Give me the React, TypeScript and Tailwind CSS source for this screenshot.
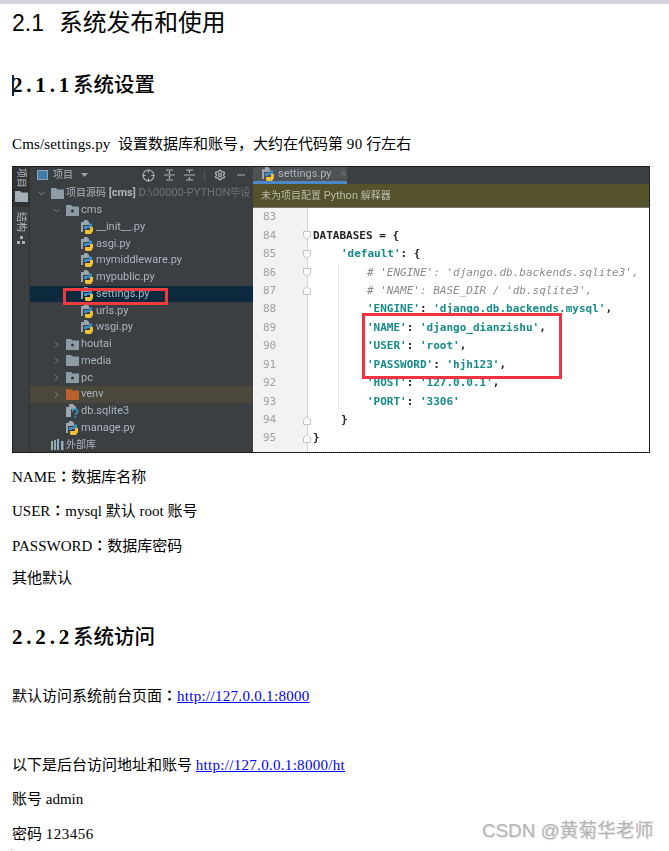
import { ChevronDown, ChevronRight, Crosshair, Minus, Settings } from "lucide-react";
import type { ReactNode } from "react";

const doc = "font-['Liberation_Serif','Noto_Sans_CJK_SC',serif] text-[15px] leading-[20px] text-black";
const ide = "font-['Roboto','Noto_Sans_CJK_SC',sans-serif]";

function PyIcon() {
  return (
    <svg width="13" height="14" viewBox="0 0 13 14" className="shrink-0">
      <path d="M0 2h3V0h3l2 2v3H2v7H0z" fill="#9aa7b0" />
      <path d="M3 6h5V3.500h3V8H6v1H3z" fill="#3f8fc4" />
      <path d="M4 13v-3h5V7h3v4l-2 3H5z" fill="#f2c037" />
    </svg>
  );
}

function DbIcon() {
  return (
    <svg width="13" height="14" viewBox="0 0 13 14" className="shrink-0">
      <path d="M0 3h3V0h4l3 3v2H5v8H0z" fill="#9aa7b0" />
      <path d="M6.500 7.500a2.500 2.500 0 1 1 3.600 2.200c-.6.300-.9.700-.9 1.300" fill="none" stroke="#3f9fd8" strokeWidth="1.400" />
      <rect x="8.500" y="12" width="1.500" height="1.600" fill="#3f9fd8" />
    </svg>
  );
}

function FolderIcon({ color = "#8d9ba5", dot = false }: { color?: string; dot?: boolean }) {
  return (
    <svg width="13" height="11" viewBox="0 0 13 11" className="shrink-0">
      <path d="M0 0h5l1.500 1.500H13V11H0z" fill={color} />
      {dot && <circle cx="6.500" cy="6" r="1.500" fill="#33373a" />}
    </svg>
  );
}

function LibIcon() {
  return (
    <svg width="13" height="11" viewBox="0 0 13 11" className="shrink-0">
      <rect x="0" y="2" width="2" height="9" fill="#8fb5a0" />
      <rect x="3" y="1" width="2" height="10" fill="#9aa7b0" />
      <rect x="6" y="0" width="2" height="11" fill="#7fb0d0" />
      <rect x="10" y="2" width="2.500" height="9" fill="#9aa7b0" />
    </svg>
  );
}

function Row({ pad, icon, chevron, children, className = "" }: { pad: string; icon: ReactNode; chevron?: "down" | "right"; children: ReactNode; className?: string }) {
  return (
    <div className={`flex h-[16.75px] shrink-0 items-center overflow-hidden whitespace-nowrap ${pad} ${className}`}>
      <span className="flex w-[15px] shrink-0 items-center">
        {chevron === "down" && <ChevronDown size={11} strokeWidth={1.5} color="#9aa5ad" />}
        {chevron === "right" && <ChevronRight size={11} strokeWidth={1.5} color="#9aa5ad" />}
      </span>
      <span className="mr-[2px] flex w-[13px] shrink-0 items-center">{icon}</span>
      {children}
    </div>
  );
}

function Fold({ kind }: { kind: "open" | "close" }) {
  return (
    <svg width="8" height="9" viewBox="0 0 8 9" className="shrink-0">
      {kind === "open" ? (
        <path d="M.5.5h7v5l-3.500 3-3.500-3z" fill="#fbfbfb" stroke="#c4c4c4" />
      ) : (
        <path d="M.5 8.500h7v-5l-3.500-3-3.500 3z" fill="#fbfbfb" stroke="#c4c4c4" />
      )}
    </svg>
  );
}

const K = ({ children }: { children: ReactNode }) => <span className="font-bold text-[#178a8a]">{children}</span>;
const C = ({ children }: { children: ReactNode }) => <span className="italic text-[#8c8c8c]">{children}</span>;
const P = ({ children }: { children: ReactNode }) => <span className="font-semibold text-[#222]">{children}</span>;

const lines: { n: number; fold?: "open" | "close"; pad: string; code: ReactNode }[] = [
  { n: 83, pad: "pl-[5px]", code: null },
  { n: 84, fold: "open", pad: "pl-[5px]", code: <P>DATABASES = {"{"}</P> },
  { n: 85, fold: "open", pad: "pl-[33px]", code: <><K>'default'</K><P>: {"{"}</P></> },
  { n: 86, fold: "open", pad: "pl-[59px]", code: <C># 'ENGINE': 'django.db.backends.sqlite3',</C> },
  { n: 87, fold: "close", pad: "pl-[59px]", code: <C># 'NAME': BASE_DIR / 'db.sqlite3',</C> },
  { n: 88, pad: "pl-[59px]", code: <><K>'ENGINE'</K><P>: </P><K>'django.db.backends.mysql'</K><P>,</P></> },
  { n: 89, pad: "pl-[59px]", code: <><K>'NAME'</K><P>: </P><K>'django_dianzishu'</K><P>,</P></> },
  { n: 90, pad: "pl-[59px]", code: <><K>'USER'</K><P>: </P><K>'root'</K><P>,</P></> },
  { n: 91, pad: "pl-[59px]", code: <><K>'PASSWORD'</K><P>: </P><K>'hjh123'</K><P>,</P></> },
  { n: 92, pad: "pl-[59px]", code: <><K>'HOST'</K><P>: </P><K>'127.0.0.1'</K><P>,</P></> },
  { n: 93, pad: "pl-[59px]", code: <><K>'PORT'</K><P>: </P><K>'3306'</K></> },
  { n: 94, fold: "close", pad: "pl-[33px]", code: <P>{"}"}</P> },
  { n: 95, fold: "close", pad: "pl-[5px]", code: <P>{"}"}</P> },
];

const Cn = ({ children }: { children: ReactNode }) => <span className="text-[10px]">{children}</span>;
const Colon = () => <span className="font-['Noto_Sans_CJK_TC',sans-serif] font-medium">：</span>;

function Screenshot() {
  return (
    <div className="relative ml-[12px] mt-[12px] flex h-[287px] w-[638px] overflow-hidden border border-dotted border-black bg-[#3c3f41]">
      {/* Left tool strip */}
      <div className={`${ide} flex w-[17px] shrink-0 flex-col items-center border-r border-[#323232] text-[10px] text-[#b5bcc2] blur-[0.3px]`}>
        <div className="flex h-[40px] w-full flex-col items-center gap-[3px] bg-[#2f3133] pt-[1px]">
          <span className="h-[20px] [text-orientation:sideways] [writing-mode:vertical-rl]">项目</span>
          <FolderIcon color="#a6afb6" />
        </div>
        <div className="mt-[5px] flex flex-col items-center gap-[2px]">
          <span className="h-[22px] [text-orientation:sideways] [writing-mode:vertical-rl]">结构</span>
          <svg width="9" height="8" viewBox="0 0 9 8">
            <rect x="3" y="0" width="3" height="3" fill="#a6afb6" />
            <rect x="0" y="5" width="3" height="3" fill="#a6afb6" />
            <rect x="5" y="5" width="3" height="3" fill="#a6afb6" />
          </svg>
        </div>
      </div>

      {/* Project tree */}
      <div className={`${ide} flex w-[223px] shrink-0 flex-col text-[11px] text-[#a9b4bd] blur-[0.3px]`}>
        <div className="flex h-[16px] shrink-0 items-center pl-[7px] pr-[3px]">
          <span className="mr-[5px] h-[10px] w-[11px] border border-[#8fa3b0] bg-[#3f7ea8]" />
          <Cn>项目</Cn>
          <svg width="7" height="4" viewBox="0 0 7 4" className="ml-[8px]"><path d="M0 0h7L3.500 4z" fill="#9aa5ad" /></svg>
          <Crosshair size={13} strokeWidth={2} color="#aeb6bc" className="ml-[54px]" />
          <svg width="11" height="12" viewBox="0 0 11 12" className="ml-[9px]"><path d="M0 6h11M2 1h7M2 11h7M5.500 2v3M5.500 7v3" stroke="#aeb6bc" strokeWidth="1.200" /></svg>
          <svg width="11" height="12" viewBox="0 0 11 12" className="ml-[9px]"><path d="M0 6h11M2 1h7M2 11h7M5.500 1v3M5.500 8v3" stroke="#aeb6bc" strokeWidth="1.200" /></svg>
          <span className="ml-[9px] h-[11px] w-px bg-[#55585a]" />
          <Settings size={12} strokeWidth={2.500} color="#aeb6bc" className="ml-[9px]" />
          <Minus size={12} strokeWidth={2} color="#aeb6bc" className="ml-[9px]" />
        </div>
        <div className="flex flex-col pt-[2px]">
          <Row pad="pl-[6px]" chevron="down" icon={<FolderIcon />}>
            <span><Cn>项目源码</Cn> <b>[cms]</b> <span className="text-[#6d7478]">D:\00000-PYTHON<Cn>毕设</Cn></span></span>
          </Row>
          <Row pad="pl-[21px]" chevron="down" icon={<FolderIcon dot />}>cms</Row>
          <Row pad="pl-[36px]" icon={<PyIcon />}>__init__.py</Row>
          <Row pad="pl-[36px]" icon={<PyIcon />}>asgi.py</Row>
          <Row pad="pl-[36px]" icon={<PyIcon />}>mymiddleware.py</Row>
          <Row pad="pl-[36px]" icon={<PyIcon />}>mypublic.py</Row>
          <Row pad="pl-[36px]" className="bg-[#0d293e]" icon={<PyIcon />}>settings.py</Row>
          <Row pad="pl-[36px]" icon={<PyIcon />}>urls.py</Row>
          <Row pad="pl-[36px]" icon={<PyIcon />}>wsgi.py</Row>
          <Row pad="pl-[21px]" chevron="right" icon={<FolderIcon dot />}>houtai</Row>
          <Row pad="pl-[21px]" chevron="right" icon={<FolderIcon />}>media</Row>
          <Row pad="pl-[21px]" chevron="right" icon={<FolderIcon dot />}>pc</Row>
          <Row pad="pl-[21px]" className="bg-[#4b473a]" chevron="right" icon={<FolderIcon color="#b9622f" />}>venv</Row>
          <Row pad="pl-[21px]" icon={<DbIcon />}>db.sqlite3</Row>
          <Row pad="pl-[21px]" icon={<PyIcon />}>manage.py</Row>
          <Row pad="pl-[6px]" icon={<LibIcon />}><Cn>外部库</Cn></Row>
        </div>
      </div>

      {/* Editor */}
      <div className="flex min-w-0 flex-1 flex-col bg-white">
        <div className={`${ide} h-[17px] shrink-0 bg-[#3c3f41] text-[11px] text-[#a9b4bd] blur-[0.3px]`}>
          <div className="flex h-full w-[94px] items-center gap-[3px] border-b-[3px] border-[#4a88c7] bg-[#4e5254] pl-[9px]">
            <PyIcon />
            <span>settings.py</span>
            <span className="ml-[6px] text-[#6d7276]">×</span>
          </div>
        </div>
        <div className={`${ide} flex h-[24px] shrink-0 items-center whitespace-pre border-b border-[#777] bg-[#54522a] pl-[8px] text-[11px] text-[#b9bbb0] blur-[0.3px]`}>
          <Cn>未为项目配置</Cn> Python <Cn>解释器</Cn>
        </div>
        <div className="flex flex-1 flex-col bg-white font-['DejaVu_Sans_Mono',monospace] text-[11px] blur-[0.3px]">
          {lines.map((l) => (
            <div key={l.n} className="flex h-[18.45px] shrink-0 items-center">
              <div className="flex h-full w-[55px] shrink-0 items-center justify-between border-r border-[#d5d5d5] bg-[#f2f2f2] pl-[10px]">
                <span className="text-[#a0a0a0]">{l.n}</span>
                {l.fold && <span className="-mr-[4px] flex"><Fold kind={l.fold} /></span>}
              </div>
              <div className={`whitespace-pre ${l.pad}`}>{l.code}</div>
            </div>
          ))}
          <div className="w-[55px] flex-1 border-r border-[#d5d5d5] bg-[#f2f2f2]" />
        </div>
      </div>

      {/* Annotations over the picture */}
      <span className="absolute left-[325px] top-[96px] h-[147px] w-px bg-[#e4e4e4]" />
      <span className="absolute left-[50px] top-[121px] h-[17px] w-[105px] border-[3px] border-[#ef3b40]" />
      <span className="absolute left-[349px] top-[146px] h-[66px] w-[200px] border-[3px] border-[#ef3340]" />
    </div>
  );
}

export default function App() {
  return (
    <div className={`relative h-[851px] w-[669px] overflow-hidden bg-white ${doc}`}>
      <div className="h-[4px] bg-[#d0d3d8]" />

      <h1 className="mt-[3px] h-[28px] whitespace-pre pl-[12px] font-['Noto_Sans_CJK_SC',sans-serif] text-[23.8px] leading-[28px]">
        <span className="mr-[15px] font-['Liberation_Sans',sans-serif] text-[23px]">2.1</span>系统发布和使用
      </h1>

      <h2 className="mt-[34px] h-[28px] pl-[12px] font-['Noto_Sans_CJK_SC',sans-serif] text-[20.5px] font-medium leading-[28px]">
        <span className="font-['Liberation_Serif',serif] text-[21px] font-bold tracking-[3.8px]">2.1.1</span>系统设置
      </h2>

      <p className="mt-[37px] h-[20px] whitespace-pre pl-[12px]"><span className="tracking-[0.15px]">Cms/settings.py</span>  设置数据库和账号，大约在代码第 <span className="tracking-[0.4px]">90</span> 行左右</p>

      <Screenshot />

      <p className="mt-[13px] h-[20px] pl-[12px]">NAME<Colon />数据库名称</p>
      <p className="mt-[14px] h-[20px] pl-[12px]">USER<Colon />mysql 默认 root 账号</p>
      <p className="mt-[15px] h-[20px] pl-[12px]">PASSWORD<Colon />数据库密码</p>
      <p className="mt-[13px] h-[20px] pl-[12px]">其他默认</p>

      <h2 className="mt-[33px] h-[28px] pl-[12px] font-['Noto_Sans_CJK_SC',sans-serif] text-[20.5px] font-medium leading-[28px]">
        <span className="font-['Liberation_Serif',serif] text-[21px] font-bold tracking-[3.8px]">2.2.2</span>系统访问
      </h2>

      <p className="mt-[36px] h-[20px] pl-[12px]">默认访问系统前台页面<Colon /><a className="tracking-[0.3px] text-[#0000ff] underline">http://127.0.0.1:8000</a></p>
      <p className="mt-[50px] h-[20px] pl-[12px]">以下是后台访问地址和账号 <a className="tracking-[0.3px] text-[#0000ff] underline">http://127.0.0.1:8000/ht</a></p>
      <p className="mt-[14px] h-[20px] pl-[12px]">账号 admin</p>
      <p className="mt-[15px] h-[20px] pl-[12px]">密码 <span className="tracking-[0.5px]">123456</span></p>

      {/* Text caret, watermark and stray mark overlays */}
      <span className="absolute left-[12px] top-[75px] h-[21px] w-[2px] bg-[#10233c]" />
      <span className="absolute left-[482px] top-[817px] font-['Liberation_Sans','Noto_Sans_CJK_SC',sans-serif] text-[18.8px] leading-[28px] text-[#b4b4b4] [text-shadow:1px_1px_1px_#e0e0e0]">
        CSDN @黄菊华老师
      </span>
      <span className="absolute left-[11px] top-[849px] h-px w-px bg-[#999]" />
    </div>
  );
}
